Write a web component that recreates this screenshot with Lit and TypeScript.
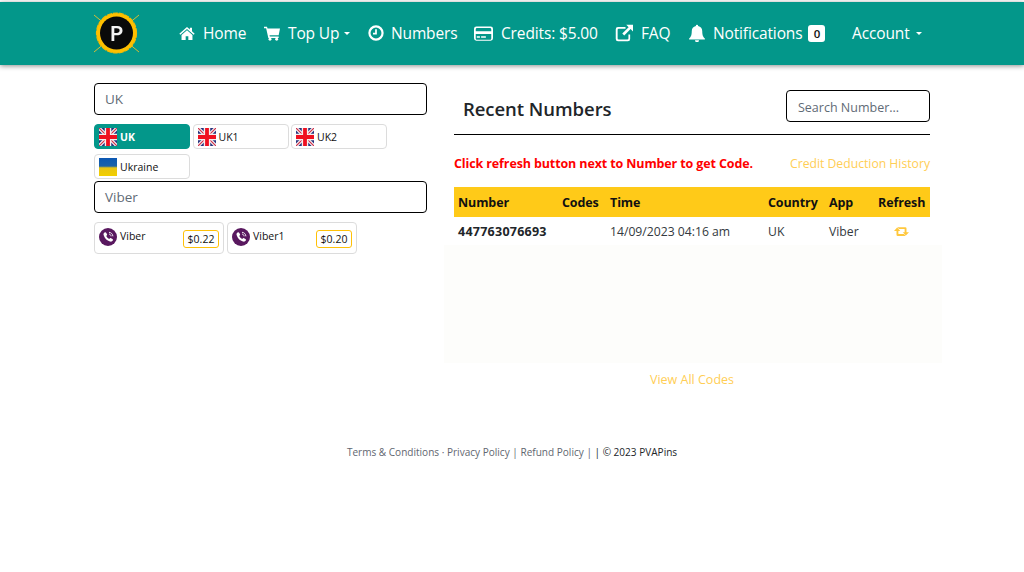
import { LitElement, html, css, svg } from "lit";
import { customElement } from "lit/decorators.js";

const icons = {
  home: svg`<path d="M12 3 0.500 13l1.500 1.700L12 6l10 8.700L23.500 13 19.500 9.500V4h-3.200v2.800L12 3Z"/><path d="M12 8 3.800 15v7.500h6.200V17h4v5.500h6.200V15L12 8Z"/>`,
  cart: svg`<path d="M0 2.500h4.500l.8 2.700H24l-2 10H8.300l.4 2H22v2.300H6.500L3.200 4.800H0V2.500Z"/><circle cx="9" cy="21.300" r="2.200"/><circle cx="19" cy="21.300" r="2.200"/>`,
  clock: svg`<path fill-rule="evenodd" d="M12 .5a11.500 11.500 0 1 0 0 23 11.500 11.500 0 0 0 0-23Zm0 3.300a8.200 8.200 0 1 1 0 16.400 8.200 8.200 0 0 1 0-16.400Z"/><path d="M10.700 6.500h2.600v7.800H7.500v-2.500h3.200V6.500Z"/>`,
  card: svg`<path fill-rule="evenodd" d="M3 3h18a3 3 0 0 1 3 3v12a3 3 0 0 1-3 3H3a3 3 0 0 1-3-3V6a3 3 0 0 1 3-3Zm-.8 3.800v2.400h19.600V6.800a1.600 1.600 0 0 0-1.600-1.600H3.800a1.600 1.600 0 0 0-1.600 1.600Zm0 5.700v5.700c0 .9.700 1.600 1.600 1.600h16.400c.9 0 1.600-.7 1.600-1.600v-5.700H2.200Z"/><path d="M3.500 15.500h4v1.800h-4zM9 15.500h6v1.800H9z"/>`,
  ext: svg`<path d="M4 4h10v2.300H5a1.500 1.500 0 0 0-1.500 1.500v11.400A1.500 1.500 0 0 0 5 20.700h11.400a1.500 1.500 0 0 0 1.500-1.500V14h2.300v6a3 3 0 0 1-3 3H4a3 3 0 0 1-3-3V7a3 3 0 0 1 3-3Z"/><path d="M15 1h9v9l-3.200-3.200-8.500 8.500-2.600-2.600 8.500-8.500L15 1Z"/>`,
  bell: svg`<path d="M12 1a1.500 1.500 0 0 1 1.500 1.700C17 3.400 19 6 19 9.500c0 6 1.500 8 3.500 9.800v1.200h-21v-1.200C3.500 17.500 5 15.500 5 9.500c0-3.500 2-6.100 5.500-6.800A1.500 1.500 0 0 1 12 1Z"/><path d="M9.300 21.500h5.400a2.700 2.700 0 0 1-5.400 0Z"/>`,
  retweet: svg`<path d="M5 5.500 10 11H7v5h9l2.700 3H6a2 2 0 0 1-2-2v-6H0l5-5.500Z"/><path d="M19 18.500 14 13h3V8H8L5.300 5H18a2 2 0 0 1 2 2v6h4l-5 5.500Z"/>`,
};

const icon = (name: keyof typeof icons, cls: string) =>
  html`<svg class=${cls} viewBox="0 0 24 24" fill="currentColor" aria-hidden="true">${icons[name]}</svg>`;

const ukFlag = html`<svg class="flag" viewBox="0 0 18 18" aria-hidden="true">
  <rect width="18" height="18" fill="#27337e"/>
  <path d="M0 0 18 18M18 0 0 18" stroke="#f4f0f0" stroke-width="3.400"/>
  <path d="M0 0 18 18M18 0 0 18" stroke="#cf2a45" stroke-width="1.100"/>
  <path d="M9 0V18M0 9H18" stroke="#f6eeee" stroke-width="6.500"/>
  <path d="M9 0V18M0 9H18" stroke="#ef1020" stroke-width="3.800"/>
</svg>`;

const uaFlag = html`<svg class="flag" viewBox="0 0 18 18" aria-hidden="true">
  <defs><linearGradient id="ua" x1="0" y1="0" x2="0" y2="1">
    <stop offset="0" stop-color="#0b57b3"/><stop offset=".45" stop-color="#1a62a8"/>
    <stop offset=".55" stop-color="#e8c414"/><stop offset="1" stop-color="#f2cf00"/>
  </linearGradient></defs>
  <rect width="18" height="18" fill="url(#ua)"/>
</svg>`;

const viberIcon = html`<svg class="flag" viewBox="0 0 18 18" aria-hidden="true">
  <circle cx="9" cy="9" r="9" fill="#59185f"/>
  <path d="M5.600 4.400c.7-.4 1.300-.2 1.700.5l.7 1.300c.3.500.1 1-.4 1.400-.3.200-.3.500-.1.900.5 1 1.200 1.800 2.300 2.300.4.200.7.100.9-.2.300-.5.900-.7 1.400-.4l1.300.8c.6.400.8 1 .4 1.600-.6 1-1.600 1.400-2.800 1-3.200-1-5.400-3.300-6.400-6.600-.3-1.100.1-2 1-2.600Z" fill="#fff"/>
  <path d="M10 4.300c2.200.2 3.700 1.700 3.900 4M10 6.100c1.200.1 2 .9 2.100 2.200" fill="none" stroke="#fff" stroke-width=".9"/>
</svg>`;

@customElement("app-root")
export class AppRoot extends LitElement {
  static styles = css`
    :host {
      display: block;
      min-height: 572px;
      background: #fff;
      font-family: "Open Sans", "Noto Sans", sans-serif;
      color: #212529;
    }
    .nav {
      box-sizing: border-box;
      margin-top: 2px;
      height: 63px;
      padding: 0 0 1px 94px;
      background: #03978a;
      box-shadow: 0 1px 5px rgba(0, 0, 0, 0.45);
      display: flex;
      align-items: center;
      color: #fff;
      font-size: 15.500px;
      letter-spacing: -0.14px;
      position: relative;
    }
    .logo { width: 46px; height: 44px; margin-right: 39px; flex: none; }
    .item { display: flex; align-items: center; flex: none; white-space: nowrap; }
    .i16 { width: 16px; height: 16px; margin-right: 8px; flex: none; }
    .i-num { margin-right: 7px; }
    .home { width: 85px; }
    .topup { width: 104px; }
    .numbers { width: 106px; }
    .credits { width: 141px; }
    .faq { width: 73px; }
    .notif { width: 164px; }
    .i-wide { width: 19px; height: 19px; }
    .i-faq { width: 18px; height: 18px; }
    .i-bell { width: 18px; height: 18px; margin-right: 7px; }
    .caret {
      width: 0;
      height: 0;
      margin-left: 5px;
      border-top: 3.500px solid #fff;
      border-left: 3.500px solid transparent;
      border-right: 3.500px solid transparent;
    }
    .caret.wide { margin-left: 6px; }
    .badge {
      margin-left: 6px;
      width: 17px;
      height: 17px;
      border-radius: 3px;
      background: #fff;
      color: #111;
      font-size: 11.500px;
      font-weight: 600;
      display: flex;
      align-items: center;
      justify-content: center;
      letter-spacing: 0;
    }
    .main { display: flex; padding-left: 94px; }
    .left { width: 333px; padding-top: 18px; flex: none; }
    .right { width: 498px; margin-left: 17px; flex: none; }
    .field {
      box-sizing: border-box;
      display: flex;
      align-items: center;
      height: 32px;
      border: 1px solid #000;
      border-radius: 4px;
      padding: 0 10px;
      font-size: 13.500px;
      color: #5f6b76;
    }
    .chips { display: flex; flex-wrap: wrap; gap: 5px 2.500px; margin-top: 9px; width: 320px; }
    .chip {
      box-sizing: border-box;
      width: 96px;
      height: 25px;
      border: 1px solid #dcdcdc;
      border-radius: 4px;
      display: flex;
      align-items: center;
      padding-left: 4px;
      gap: 3px;
      font-size: 10.500px;
      color: #111;
    }
    .chip.on { background: #03978a; border-color: #03978a; color: #fff; font-weight: 700; }
    .flag { width: 18px; height: 18px; flex: none; }
    .f2 { margin-top: 2px; }
    .apps { display: flex; gap: 3px; margin-top: 9px; }
    .app {
      box-sizing: border-box;
      width: 130px;
      height: 32px;
      border: 1px solid #dcdcdc;
      border-radius: 4px;
      display: flex;
      align-items: flex-start;
      padding: 5px 4px 0;
      gap: 3px;
      font-size: 10.500px;
      color: #111;
    }
    .app span.name { line-height: 16px; flex: 1; }
    .price {
      box-sizing: border-box;
      height: 18px;
      width: 36px;
      margin-top: 2px;
      border: 1px solid #ffc107;
      border-radius: 3px;
      display: flex;
      align-items: center;
      justify-content: center;
      font-size: 10.500px;
    }
    .pad { padding: 25px 12px 0 10px; }
    .title-row { display: flex; align-items: center; justify-content: space-between; height: 44px; border-bottom: 1px solid #000; }
    .title-row h2 { margin: 0 0 0 9px; font-size: 18.500px; font-weight: 600; position: relative; top: -4px; letter-spacing: -0.05px; }
    .search { width: 144px; position: relative; top: -6px; font-size: 12.500px; padding: 2px 0 0 11px; }
    .hint { display: flex; justify-content: space-between; align-items: center; height: 52px; padding-top: 5px; box-sizing: border-box; }
    .hint b { color: #f00; font-size: 12.500px; letter-spacing: -0.12px; }
    .hint a { color: #ffce55; font-size: 12.200px; }
    .table {
      display: grid;
      grid-template-columns: 104px 48px 158px 61px 49px 1fr;
      font-size: 12.200px;
    }
    .head { background: #ffca18; height: 30px; font-weight: 700; color: #111; font-size: 12.500px; display: flex; align-items: center; padding-left: 4px; letter-spacing: -0.1px; }
    .cell { height: 28px; display: flex; align-items: center; padding-left: 4px; color: #343a40; }
    .cell.num { font-weight: 700; color: #212529; font-size: 12.500px; letter-spacing: .25px; white-space: nowrap; }
    .retweet { width: 15px; height: 15px; color: #ffc83d; margin-left: 16px; }
    .blank { height: 118px; background: #fdfdfb; }
    .all { text-align: center; color: #ffce55; font-size: 12.500px; margin: 8px 2px 0 0; line-height: 17px; }
    .foot { text-align: center; font-size: 10.050px; color: #5f6670; margin-top: 57px; line-height: 14px; }
    .foot b { font-weight: 400; color: #212529; }
  `;

  render() {
    return html`
      <nav class="nav">
        <svg class="logo" viewBox="0 0 46 44" aria-hidden="true">
          <path d="M0 4 45 41M45 4 0 41" stroke="#d6bd33" stroke-width="1"/>
          <circle cx="22.500" cy="22" r="20" fill="#ffc000" stroke="#f7bb00" stroke-width="1.200" stroke-dasharray="5 1"/>
          <circle cx="22.500" cy="22" r="16.500" fill="#0a0a0a"/>
          <path d="M17.500 30V15h5.700c3.400 0 5.300 1.600 5.300 4.500s-2 4.800-5.400 4.800h-2.800V30h-2.800Zm2.800-8h2.400c1.800 0 2.900-.9 2.900-2.400s-1-2.300-2.900-2.300h-2.400V22Z" fill="#f4f4f4"/>
        </svg>
        <div class="item home">${icon("home", "i16")}Home</div>
        <div class="item topup">${icon("cart", "i16")}Top Up<span class="caret"></span></div>
        <div class="item numbers">${icon("clock", "i16 i-num")}Numbers</div>
        <div class="item credits">${icon("card", "i16 i-wide")}Credits: $5.00</div>
        <div class="item faq">${icon("ext", "i16 i-faq")}FAQ</div>
        <div class="item notif">${icon("bell", "i16 i-bell")}Notifications<span class="badge">0</span></div>
        <div class="item">Account<span class="caret wide"></span></div>
      </nav>
      <div class="main">
        <section class="left">
          <div class="field">UK</div>
          <div class="chips">
            <div class="chip on">${ukFlag}UK</div>
            <div class="chip">${ukFlag}UK1</div>
            <div class="chip">${ukFlag}UK2</div>
            <div class="chip">${uaFlag}Ukraine</div>
          </div>
          <div class="field f2">Viber</div>
          <div class="apps">
            <div class="app">${viberIcon}<span class="name">Viber</span><span class="price">$0.22</span></div>
            <div class="app">${viberIcon}<span class="name">Viber1</span><span class="price">$0.20</span></div>
          </div>
        </section>
        <section class="right">
          <div class="pad">
            <div class="title-row">
              <h2>Recent Numbers</h2>
              <div class="field search">Search Number...</div>
            </div>
            <div class="hint">
              <b>Click refresh button next to Number to get Code.</b>
              <a>Credit Deduction History</a>
            </div>
            <div class="table">
              <div class="head">Number</div>
              <div class="head">Codes</div>
              <div class="head">Time</div>
              <div class="head">Country</div>
              <div class="head">App</div>
              <div class="head">Refresh</div>
              <div class="cell num">447763076693</div>
              <div class="cell"></div>
              <div class="cell">14/09/2023 04:16 am</div>
              <div class="cell">UK</div>
              <div class="cell">Viber</div>
              <div class="cell">${icon("retweet", "retweet")}</div>
            </div>
          </div>
          <div class="blank"></div>
          <div class="all">View All Codes</div>
        </section>
      </div>
      <footer class="foot">Terms &amp; Conditions · Privacy Policy | Refund Policy | <b>| © 2023 PVAPins</b></footer>
    `;
  }
}
